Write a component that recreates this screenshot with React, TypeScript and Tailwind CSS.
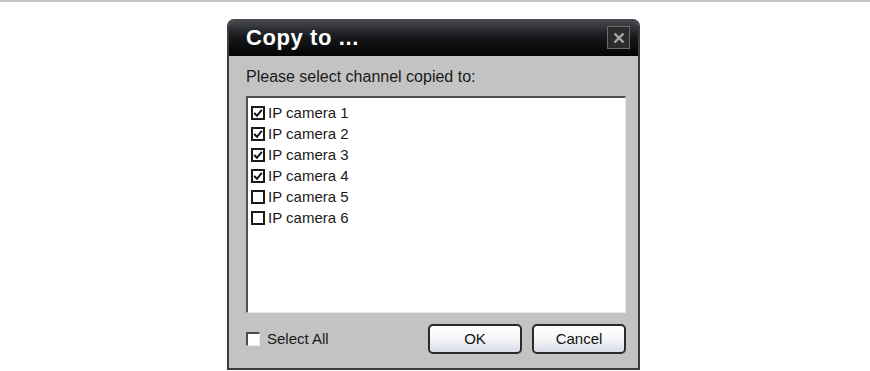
import React, { useState } from "react";

const cameras = [
  { name: "IP camera 1", on: true },
  { name: "IP camera 2", on: true },
  { name: "IP camera 3", on: true },
  { name: "IP camera 4", on: true },
  { name: "IP camera 5", on: false },
  { name: "IP camera 6", on: false },
];

function Box({ checked }: { checked: boolean }) {
  return (
    <span className="w-[14px] h-[14px] border-2 border-[#1a1a1a] bg-white flex items-center justify-center shrink-0">
      {checked && (
        <svg width="10" height="10" viewBox="0 0 10 10">
          <path d="M1.2 5 L4 7.8 L8.8 1.8" fill="none" stroke="#111" strokeWidth="2" />
        </svg>
      )}
    </span>
  );
}

export default function App() {
  const [items, setItems] = useState(cameras);
  const [all, setAll] = useState(false);

  return (
    <div
      className="w-[870px] h-[371px] bg-white overflow-hidden flex flex-col"
      style={{ fontFamily: '"Liberation Sans", Arial, sans-serif' }}
    >
      <div className="h-[2px] bg-[#c4c4c4] shrink-0" />

      <div className="flex justify-center pt-[17px] pr-[3px]">
        <div className="w-[413px] h-[351px] flex flex-col rounded-t-[7px] overflow-hidden border-x-2 border-b-2 border-[#3c3c3c] bg-[#c3c3c3]">
          {/* Title bar */}
          <div className="h-[37px] shrink-0 flex items-center justify-between pl-[17px] pr-[8px] bg-gradient-to-b from-[#4a4d53] via-[#17181b] to-[#050505]">
            <span className="text-white font-bold text-[22px] tracking-[0.6px]">Copy to ...</span>
            <span className="w-[23px] h-[23px] border border-[#6a6a6a] bg-[#2c2c2c] flex items-center justify-center">
              <svg width="12" height="12" viewBox="0 0 12 12">
                <path d="M1.5 1.5 L10.5 10.5 M10.5 1.5 L1.5 10.5" stroke="#a8a8a8" strokeWidth="2.4" />
              </svg>
            </span>
          </div>

          {/* Body */}
          <div className="flex-1 flex flex-col pl-[17px] pr-[12px] pt-[12px] pb-[14px] text-[15px] text-[#1a1a1a]">
            <div className="text-[16px] leading-[18px] mb-[10px]">Please select channel copied to:</div>

            <div className="h-[217px] bg-white border-t-2 border-l-2 border-[#505050] border-r border-b border-r-[#e8e8e8] border-b-[#e8e8e8] pt-[4px] pl-[3px] flex flex-col">
              {items.map((c, i) => (
                <div
                  key={c.name}
                  className="h-[21px] flex items-center gap-[3px] cursor-pointer"
                  onClick={() =>
                    setItems(items.map((x, j) => (j === i ? { ...x, on: !x.on } : x)))
                  }
                >
                  <Box checked={c.on} />
                  <span className="leading-none">{c.name}</span>
                </div>
              ))}
            </div>

            <div className="flex items-center mt-auto">
              <div
                className="flex items-center gap-[7px] cursor-pointer"
                onClick={() => setAll(!all)}
              >
                <span className="w-[14px] h-[14px] bg-white border-t-2 border-l-2 border-[#4a4a4a] border-r border-b border-r-[#efefef] border-b-[#efefef]" />
                <span>Select All</span>
              </div>
              <div className="ml-auto flex gap-[10px]">
                <button className="w-[94px] h-[30px] rounded-[5px] border-2 border-[#2a2a2a] bg-gradient-to-b from-white via-[#f6f6f8] to-[#d8dce8] text-[15px] text-[#111]">
                  OK
                </button>
                <button className="w-[94px] h-[30px] rounded-[5px] border-2 border-[#2a2a2a] bg-gradient-to-b from-white via-[#f6f6f8] to-[#d8dce8] text-[15px] text-[#111]">
                  Cancel
                </button>
              </div>
            </div>
          </div>
        </div>
      </div>
    </div>
  );
}
